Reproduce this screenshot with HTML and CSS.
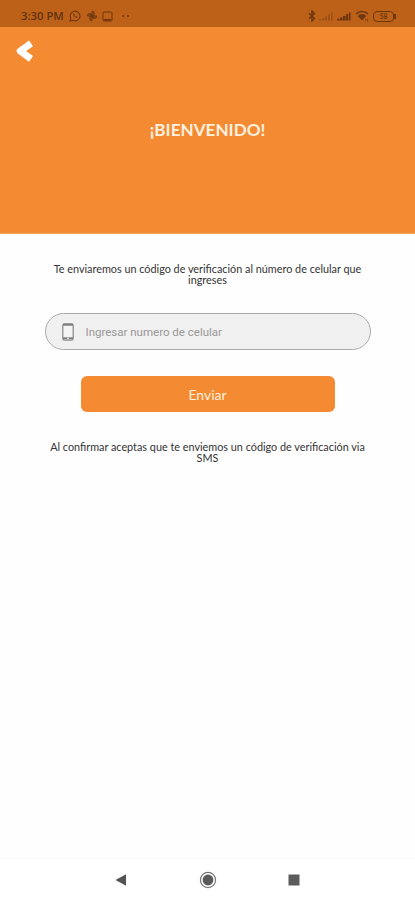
FILE: index.html
```html
<!DOCTYPE html>
<html lang="es">
<head>
    <meta charset="UTF-8">
    <meta name="viewport" content="width=device-width, initial-scale=1.0">
    <title>Bienvenido</title>
    <link rel="stylesheet" href="styles.css">
</head>
<body>
    <div class="screen">
        <div class="status-bar">
            <div class="status-left">
                <span class="time">3:30 PM</span>
                <!-- WhatsApp -->
                <svg class="icon-chat" width="12" height="12" viewBox="0 0 12 12" fill="none" stroke="currentColor">
                    <path d="M1 11l.8-2.6A4.9 4.9 0 1 1 3.7 10.3z" stroke-width="1.1"/>
                    <path d="M4.2 3.8c0 2.2 1.8 4 4 4l.4-1-1.3-.6-.6.5-1.4-1.4.5-.6-.6-1.3z" fill="currentColor" stroke="none"/>
                </svg>
                <svg class="icon-fan" width="12" height="12" viewBox="0 0 12 12" fill="currentColor" fill-opacity=".5" stroke="currentColor">
                    <path d="M6 6V1.2a2.3 2.3 0 0 1 0 4.8zM6 6h4.8a2.3 2.3 0 0 1-4.8 0zM6 6v4.8a2.3 2.3 0 0 1 0-4.8zM6 6H1.2a2.3 2.3 0 0 1 4.8 0z"/>
                </svg>
                <svg class="icon-image" width="11" height="11" viewBox="0 0 11 11" fill="none" stroke="currentColor">
                    <rect x="1" y="1" width="9" height="9" rx="1"/>
                    <path d="M2 9l2-.8 1.500.4L7 8.200 9 9z" fill="currentColor"/>
                </svg>
                <span class="dots"><i></i><i></i></span>
            </div>
            <div class="status-right">
                <svg width="8" height="12" viewBox="0 0 8 12" fill="none" stroke="currentColor" stroke-width="1.4">
                    <path d="M1 3.200l5.500 5.300L4 11V1l2.500 2.500L1 8.800"/>
                </svg>
                <svg class="signal-off" width="14" height="10" viewBox="0 0 14 10" fill="currentColor">
                    <path d="M0 9.500h2V8H0zM3 9.500h2V7H3zM6 9.500h2V5.500H6zM9 9.500h1.800v-6H9zM12 9.500h1.500v-8H12z"/>
                </svg>
                <svg class="signal" width="14" height="10" viewBox="0 0 14 10" fill="currentColor">
                    <path d="M0 9.500h2.600V7.700H0zM3 9.500h2.600v-3H3zM6 9.500h2.600V5H6zM9 9.500h2.400V3H9zM12 9.500h1.500v-8H12z"/>
                </svg>
                <svg class="wifi" width="14" height="12" viewBox="0 0 14 12">
                    <path d="M1 4a8.400 8.400 0 0 1 12 0" fill="none" stroke="currentColor" stroke-width="1.600"/>
                    <path d="M2.700 5.900a5.800 5.800 0 0 1 8.600 0L7 10.500z" fill="currentColor"/>
                    <path d="M10.800 8.500v3M12.500 8.500v3" stroke="currentColor" stroke-width=".6"/>
                </svg>
                <span class="battery">58</span>
            </div>
        </div>

        <div class="header">
            <svg class="back" width="18" height="22" viewBox="0 0 18 22" fill="none" stroke="#fff" stroke-width="7" stroke-linejoin="round" stroke-linecap="square">
                <path d="M12.200 5.400L4.200 11l8 5.800"/>
            </svg>
            <h1>¡BIENVENIDO!</h1>
        </div>

        <div class="content">
            <p class="intro">Te enviaremos un código de verificación al número de celular que ingreses</p>
            <div class="field">
                <svg width="12" height="18" viewBox="0 0 12 18">
                    <rect x=".8" y=".8" width="10.400" height="16.400" rx="1.800" fill="#f4f4f4" stroke="#888" stroke-width="1.200"/>
                    <path d="M1 1.800h10M1 15.300h10" stroke="#808080" stroke-width="2"/>
                    <path d="M5 15.300h2" stroke="#eee"/>
                </svg>
                <input type="text" placeholder="Ingresar numero de celular">
            </div>
            <button class="send">Enviar</button>
            <p class="note">Al confirmar aceptas que te enviemos un código de verificación via SMS</p>
        </div>

        <div class="nav-bar">
            <svg width="12" height="14" viewBox="0 0 12 14"><path d="M.5 7L11 1.200v11.600z" fill="#555"/></svg>
            <svg width="18" height="18" viewBox="0 0 18 18">
                <circle cx="9" cy="9" r="7.600" fill="none" stroke="#777" stroke-width="1.200"/>
                <circle cx="9" cy="9" r="5.400" fill="#5a5a5a"/>
            </svg>
            <svg width="12" height="12" viewBox="0 0 12 12"><rect x=".5" y=".5" width="11" height="11" fill="#5c5c5c"/></svg>
        </div>
    </div>
</body>
</html>
```
FILE: styles.css
```css
* {
    box-sizing: border-box;
}

body {
    margin: 0;
    font-family: Lato, "Liberation Sans", sans-serif;
    background-color: #fefefe;
}

.screen {
    display: flex;
    flex-direction: column;
    height: 900px;
}

.status-bar {
    display: flex;
    justify-content: space-between;
    align-items: center;
    height: 27px;
    padding: 5px 21px 0 21px;
    background-color: #bd6118;
    color: #6f3710;
}

.status-left,
.status-right {
    display: flex;
    align-items: center;
}

.time {
    width: 43px;
    margin-right: 5px;
    font-family: "Open Sans", sans-serif;
    font-size: 11.3px;
    font-weight: 600;
    line-height: 14px;
    white-space: nowrap;
    color: #5e3213;
}

.icon-fan {
    margin-left: 5px;
}

.icon-image {
    margin-left: 4px;
}

.dots {
    display: flex;
    gap: 3px;
    margin-left: 9px;
}

.dots i {
    width: 2px;
    height: 2px;
    background-color: #7d3e10;
}

.signal-off {
    margin-left: 3px;
    opacity: 0.4;
}

.signal {
    margin-left: 4px;
}

.wifi {
    margin-left: 4px;
}

.battery {
    position: relative;
    width: 21px;
    height: 11px;
    margin-left: 4px;
    border: 1.5px solid #6f3710;
    border-radius: 4px;
    font-size: 7px;
    font-weight: bold;
    line-height: 9px;
    text-align: center;
}

.battery::after {
    content: "";
    position: absolute;
    top: 2px;
    right: -3px;
    width: 2px;
    height: 5px;
    background-color: #6f3710;
}

.header {
    height: 207px;
    padding: 13px 16px;
    background-color: #f48b32;
    border-bottom: 1px solid #f7a761;
}

.back {
    display: block;
}

h1 {
    margin: 57px 0 0;
    font-size: 17.1px;
    font-weight: 700;
    line-height: 22px;
    text-align: center;
    color: #fff0df;
}

.content {
    flex: 1;
    display: flex;
    flex-direction: column;
    align-items: center;
}

p {
    margin: 0;
    width: 320px;
    font-size: 10.83px;
    line-height: 11px;
    text-align: center;
    color: #333;
}

.intro {
    margin-top: 29px;
}

.field {
    display: flex;
    align-items: center;
    width: 326px;
    height: 37px;
    margin-top: 28px;
    padding-left: 16px;
    border: 1px solid #aaa;
    border-radius: 19px;
    background-color: #f0f0f0;
}

.field input {
    flex: 1;
    margin-left: 12px;
    padding: 0;
    border: none;
    outline: none;
    background: none;
    font-family: Roboto, sans-serif;
    font-size: 11.5px;
}

.field input::placeholder {
    color: #999;
}

.send {
    width: 254px;
    height: 36px;
    margin-top: 26px;
    padding: 0;
    border: none;
    border-radius: 6px;
    background-color: #f48b32;
    font-family: inherit;
    font-size: 14px;
    color: #fff0df;
}

.note {
    margin-top: 29px;
}

.nav-bar {
    display: flex;
    justify-content: space-between;
    align-items: center;
    height: 42px;
    padding: 0 115px;
    background-color: #fff;
    border-top: 1px solid #fafafa;
}
```
